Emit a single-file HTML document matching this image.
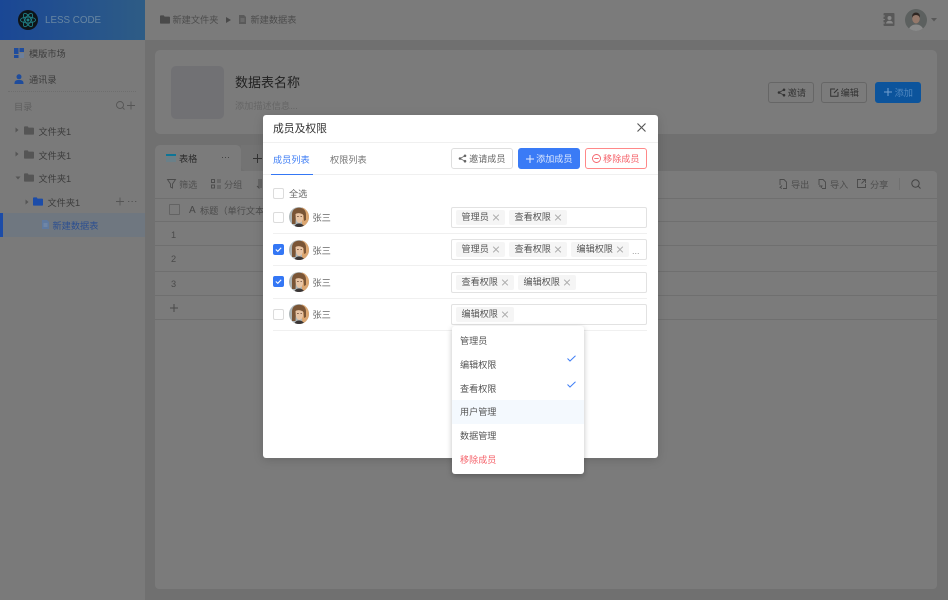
<!DOCTYPE html>
<html lang="zh"><head><meta charset="utf-8"><title>成员及权限</title>
<style>
*{box-sizing:border-box}
html,body{margin:0;padding:0}
body{width:948px;height:600px;overflow:hidden;position:relative;background:#707070;font-family:"Liberation Sans","Noto Sans CJK SC",sans-serif;font-size:9.2px;color:#3a3a3a}
.a{position:absolute}
.t{position:absolute;white-space:nowrap;line-height:14px;height:14px;margin-top:1.5px}
svg{position:absolute;display:block;overflow:visible}
.cb{position:absolute;width:11px;height:11px;left:273px;border:1px solid #dcdcdc;border-radius:2px;background:#fff}
.cb.on{background:#3477f5;border-color:#3477f5}
.tagbox{position:absolute;left:451px;width:196px;border:1px solid #e2e2e2;border-radius:2px;background:#fff}
.tag{position:absolute;top:1.500px;height:15.500px;background:#f5f5f5;border-radius:2px;color:#555;line-height:15.500px;padding-left:5.500px;white-space:nowrap;font-size:9.1px}
.tag i{position:absolute;top:4.500px;right:6.500px;width:6px;height:6px}
.tag i:before,.tag i:after{content:"";position:absolute;left:-1px;top:2.500px;width:8px;height:1px;background:#aaa;transform:rotate(45deg)}
.tag i:after{transform:rotate(-45deg)}
.line{position:absolute;left:273px;width:374px;height:1px;background:#f0f0f0}
.btn{position:absolute;top:148px;height:21px;width:62px;border-radius:3px;line-height:20px;font-size:9.100px;text-align:right;padding-right:6.500px}
.hb{position:absolute;top:82px;height:21px;border-radius:3px;line-height:20px;border:1px solid #666;color:#333;text-align:right;padding-right:7px;font-size:9.200px}
.dd{position:absolute;left:452px;width:132px;height:24px;line-height:24px;padding-left:8px;color:#555;font-size:9.100px}
.g{color:#3c3c3c}
</style></head>
<body>
<svg width="0" height="0" style="position:absolute"><defs>
<symbol id="av" viewBox="0 0 20 20">
<clipPath id="c"><circle cx="10" cy="10" r="10"/></clipPath>
<g clip-path="url(#c)">
<rect width="20" height="20" fill="#aeb6b8"/>
<rect x="13" width="7" height="20" fill="#dba671"/>
<path d="M3 17V8Q3 1 10 .8Q17 1 17 8V13L15 14L14.500 8L7 6.500L6.500 17Z" fill="#7a5536"/>
<path d="M6.500 7Q10 5 14 7.500L14 12Q12.500 16 10.200 16Q7.500 15.500 6.800 11Z" fill="#e8c4a4"/>
<path d="M5 20Q7 16 10 16.500Q13 16 16 20Z" fill="#3a3534"/>
<path d="M8 9.500h1.800M11.500 9.500h1.500" stroke="#6a4a36" stroke-width=".7"/>
</g></symbol>
<symbol id="folder" viewBox="0 0 12 10"><path d="M0 1Q0 0 1 0H4.500L5.500 1.500H11Q12 1.500 12 2.500V9Q12 10 11 10H1Q0 10 0 9Z"/></symbol>
</defs></svg>

<!-- sidebar -->
<div class="a" style="left:0;top:0;width:145px;height:600px;background:#7a7a7a"></div>
<div class="a" style="left:0;top:0;width:145px;height:40px;background:linear-gradient(90deg,#1a4795,#2e5c85)"></div>
<svg style="left:18px;top:10px" width="20" height="20" viewBox="0 0 20 20"><circle cx="10" cy="10" r="10" fill="#0e1418"/><g fill="none" stroke="#1f7f85" stroke-width=".9"><ellipse cx="10" cy="10" rx="7.500" ry="3"/><ellipse cx="10" cy="10" rx="7.500" ry="3" transform="rotate(60 10 10)"/><ellipse cx="10" cy="10" rx="7.500" ry="3" transform="rotate(120 10 10)"/></g><circle cx="10" cy="10" r="1.500" fill="#1f7f85"/></svg>
<div class="t" style="left:45px;top:12px;color:#6886a2;font-size:9.800px">LESS CODE</div>

<svg style="left:14px;top:48px" width="10" height="10" viewBox="0 0 10 10"><rect width="4.500" height="6" fill="#1f4c9c"/><rect x="5.500" width="4.500" height="4" fill="#1f4c9c"/><rect y="7" width="4.500" height="3" fill="#1f4c9c"/><rect x="5.500" y="5" width="4.500" height="5" fill="#6d7f9a"/></svg>
<div class="t g" style="left:29px;top:45.500px">模版市场</div>
<svg style="left:14px;top:74px" width="10" height="10" viewBox="0 0 10 10"><circle cx="5" cy="2.800" r="2.500" fill="#1f4c9c"/><path d="M0.500 10V9Q0.500 6.500 3.500 6H6.500Q9.500 6.500 9.500 9V10Z" fill="#1f4c9c"/></svg>
<div class="t g" style="left:29px;top:71.500px">通讯录</div>
<div class="a" style="left:8px;top:91px;width:128px;border-top:1px dotted #6e6e6e"></div>
<div class="t" style="left:14px;top:98px;color:#5e5e5e">目录</div>
<svg style="left:115px;top:100px" width="20" height="11" viewBox="0 0 20 11" fill="none" stroke="#555" stroke-width=".9"><circle cx="5" cy="5" r="3.500"/><path d="M7.600 7.600L9.500 9.500M12 5.500h8M16 1.500v8"/></svg>

<svg style="left:15px;top:127px" width="4" height="6" viewBox="0 0 4 6"><path d="M0.500 0.500L3.500 3L0.500 5.500Z" fill="#555"/></svg>
<svg style="left:24px;top:126px" width="10" height="9" fill="#555"><use href="#folder" width="10" height="9"/></svg>
<div class="t g" style="left:38.500px;top:123.500px">文件夹1</div>
<svg style="left:15px;top:151px" width="4" height="6" viewBox="0 0 4 6"><path d="M0.500 0.500L3.500 3L0.500 5.500Z" fill="#555"/></svg>
<svg style="left:24px;top:150px" width="10" height="9" fill="#555"><use href="#folder" width="10" height="9"/></svg>
<div class="t g" style="left:38.500px;top:147px">文件夹1</div>
<svg style="left:14.500px;top:176px" width="6" height="4" viewBox="0 0 6 4"><path d="M0.500 0.500L5.500 0.500L3 3.500Z" fill="#555"/></svg>
<svg style="left:24px;top:173px" width="10" height="9" fill="#555"><use href="#folder" width="10" height="9"/></svg>
<div class="t g" style="left:38.500px;top:170.500px">文件夹1</div>
<svg style="left:24.500px;top:198.500px" width="4" height="6" viewBox="0 0 4 6"><path d="M0.500 0.500L3.500 3L0.500 5.500Z" fill="#555"/></svg>
<svg style="left:33px;top:197px" width="10" height="9" fill="#1c4ca8"><use href="#folder" width="10" height="9"/></svg>
<div class="t g" style="left:47.500px;top:194.500px">文件夹1</div>
<svg style="left:115px;top:197px" width="22" height="9" viewBox="0 0 22 9" fill="none" stroke="#555" stroke-width=".9"><path d="M1 4.500h8M5 .5v8"/><path d="M13 4.500h1.300M16.500 4.500h1.300M20 4.500h1.300" stroke-width="1"/></svg>
<div class="a" style="left:0;top:213px;width:145px;height:24px;background:#6f7780"></div>
<div class="a" style="left:0;top:213px;width:2.500px;height:24px;background:#1c4ca8"></div>
<svg style="left:42px;top:220px" width="7" height="9" viewBox="0 0 7 9"><path d="M0 0H5L7 2V9H0Z" fill="#5f7aa0"/><path d="M1.500 4h4M1.500 6h4" stroke="#8b9bb0" stroke-width=".7"/></svg>
<div class="t" style="left:52.500px;top:217.500px;color:#2c4f90">新建数据表</div>

<!-- top bar -->
<div class="a" style="left:145px;top:0;width:803px;height:40px;background:#7b7b7b"></div>
<svg style="left:160px;top:15px" width="10" height="9" fill="#4a4a4a"><use href="#folder" width="10" height="9"/></svg>
<div class="t" style="left:172.500px;top:11.500px;color:#4c4c4c">新建文件夹</div>
<svg style="left:226px;top:17px" width="5" height="6" viewBox="0 0 5 6"><path d="M0 0L5 3L0 6Z" fill="#4a4a4a"/></svg>
<svg style="left:239px;top:15px" width="7" height="9" viewBox="0 0 7 9"><path d="M0 0H5L7 2V9H0Z" fill="#5a5a5a"/><path d="M1.500 4h4M1.500 6h4" stroke="#858585" stroke-width=".7"/></svg>
<div class="t" style="left:250.500px;top:11.500px;color:#4c4c4c">新建数据表</div>
<svg style="left:883px;top:13px" width="12" height="13" viewBox="0 0 12 13"><rect x="0.500" width="11" height="13" rx="1" fill="#585858"/><circle cx="6.500" cy="5" r="2" fill="#888"/><path d="M3 10.500Q3.500 7.800 6.500 7.800Q9.500 7.800 10 10.500Z" fill="#888"/><path d="M0 3h2M0 6.500h2M0 10h2" stroke="#888" stroke-width=".8"/></svg>
<svg style="left:905px;top:9px" width="22" height="22" viewBox="0 0 22 22"><circle cx="11" cy="11" r="11" fill="#5c605f"/><clipPath id="c2"><circle cx="11" cy="11" r="11"/></clipPath><g clip-path="url(#c2)"><path d="M3 22Q5 15.500 11 15.500Q17 15.500 19 22Z" fill="#8a8a8a"/><ellipse cx="11" cy="9.500" rx="3.800" ry="5" fill="#94786a"/><path d="M7 9Q6.800 3.500 11 3.500Q15.200 3.500 15 9Q14 6 11 6Q8 6 7 9Z" fill="#2e2622"/></g></svg>
<svg style="left:931px;top:18px" width="6" height="4" viewBox="0 0 6 4"><path d="M0 0H6L3 3.500Z" fill="#585858"/></svg>

<!-- header card -->
<div class="a" style="left:155px;top:50px;width:782px;height:84px;background:#7b7b7b;border-radius:5px"></div>
<div class="a" style="left:171px;top:66px;width:53px;height:53px;background:#717174;border-radius:5px"></div>
<div class="t" style="left:235px;top:72.500px;font-size:13px;line-height:17px;height:17px;color:#222">数据表名称</div>
<div class="t" style="left:235px;top:97.500px;color:#666">添加描述信息...</div>
<div class="hb" style="left:768px;width:46px">邀请</div>
<svg style="left:777px;top:88px" width="9" height="9" viewBox="0 0 9 9" fill="#333"><circle cx="7" cy="1.800" r="1.300"/><circle cx="2" cy="4.500" r="1.300"/><circle cx="7" cy="7.200" r="1.300"/><path d="M7 1.800L2 4.500L7 7.200" fill="none" stroke="#333" stroke-width=".8"/></svg>
<div class="hb" style="left:821px;width:46px">编辑</div>
<svg style="left:830px;top:88px" width="9" height="9" viewBox="0 0 9 9" fill="none" stroke="#333" stroke-width="1"><path d="M5 1H.7V8.300H8V4M4 5L8 1"/></svg>
<div class="hb" style="left:875px;width:46px;background:#0c549c;border-color:#0c549c;color:#5389c0">添加</div>
<svg style="left:884px;top:88px" width="8" height="8" viewBox="0 0 8 8" stroke="#74a0cf" stroke-width="1"><path d="M0 4h8M4 0v8"/></svg>

<!-- table card -->
<div class="a" style="left:155px;top:171px;width:782px;height:418px;background:#7b7b7b;border-radius:0 4px 4px 4px"></div>
<div class="a" style="left:155px;top:145px;width:86px;height:27px;background:#7b7b7b;border-radius:5px 5px 0 0"></div>
<div class="a" style="left:241px;top:145px;width:30px;height:26px;background:#737373;border-radius:0 5px 0 5px"></div>
<svg style="left:166px;top:154px" width="10" height="8" viewBox="0 0 10 8"><rect width="10" height="2" fill="#0d7597"/><rect y="2.500" width="10" height="5.500" fill="#6a8089"/></svg>
<div class="t" style="left:179px;top:150px;color:#2a2a2a">表格</div>
<div class="t" style="left:221px;top:148px;color:#3c3c3c;font-size:9px">···</div>
<svg style="left:253px;top:154px" width="9" height="9" viewBox="0 0 9 9" stroke="#333" stroke-width="1"><path d="M0 4.500h9M4.500 0v9"/></svg>
<svg style="left:167px;top:179px" width="9" height="10" viewBox="0 0 9 10" fill="none" stroke="#4a4a4a" stroke-width=".9"><path d="M.5.500h8L5.500 5v4L3.500 8V5Z"/></svg>
<div class="t" style="left:179px;top:176.500px;color:#505050">筛选</div>
<svg style="left:211px;top:179px" width="10" height="10" viewBox="0 0 10 10" fill="none" stroke="#4a4a4a" stroke-width=".9"><rect x=".5" y=".5" width="3" height="3"/><rect x=".5" y="6" width="3" height="3"/><path d="M6 1h4M6 3h4M6 7h4M6 9h4" stroke-width=".7"/></svg>
<div class="t" style="left:224px;top:176.500px;color:#505050">分组</div>
<svg style="left:256px;top:179px" width="7" height="10" viewBox="0 0 7 10" fill="none" stroke="#4a4a4a" stroke-width=".9"><path d="M3 0v9L1 7M5 0v9"/></svg>
<div class="a" style="left:155px;top:198px;width:782px;height:1px;background:#6f6f6f"></div>
<div class="a" style="left:169px;top:204px;width:11px;height:11px;border:1px solid #636363;border-radius:1px"></div>
<div class="t" style="left:189px;top:202.500px;color:#474747;font-size:10px">A</div>
<div class="t" style="left:200px;top:202.500px;color:#4c4c4c">标题（单行文本）</div>
<div class="a" style="left:155px;top:221px;width:782px;height:1px;background:#6f6f6f"></div>
<div class="t" style="left:171px;top:226.500px;color:#4a4a4a">1</div>
<div class="a" style="left:155px;top:245px;width:782px;height:1px;background:#6f6f6f"></div>
<div class="t" style="left:171px;top:250.500px;color:#4a4a4a">2</div>
<div class="a" style="left:155px;top:270.500px;width:782px;height:1px;background:#6f6f6f"></div>
<div class="t" style="left:171px;top:275.500px;color:#4a4a4a">3</div>
<div class="a" style="left:155px;top:295px;width:782px;height:1px;background:#6f6f6f"></div>
<svg style="left:170px;top:304px" width="8" height="8" viewBox="0 0 8 8" stroke="#4a4a4a" stroke-width="1"><path d="M0 4h8M4 0v8"/></svg>
<div class="a" style="left:155px;top:319px;width:782px;height:1px;background:#6f6f6f"></div>
<svg style="left:779px;top:179px" width="8" height="10" viewBox="0 0 8 10" fill="none" stroke="#4a4a4a" stroke-width=".9"><path d="M1 6V.5H5L7.500 3V9.500H4M3 6.500L1 8.500L3 9.500"/></svg>
<div class="t" style="left:791px;top:176.500px;color:#4e4e4e">导出</div>
<svg style="left:818px;top:179px" width="8" height="10" viewBox="0 0 8 10" fill="none" stroke="#4a4a4a" stroke-width=".9"><path d="M1 6V.5H5L7.500 3V9.500H4M1 7H4L3 9"/></svg>
<div class="t" style="left:830px;top:176.500px;color:#4e4e4e">导入</div>
<svg style="left:857px;top:179px" width="9" height="9" viewBox="0 0 9 9" fill="none" stroke="#4a4a4a" stroke-width=".9"><path d="M4 .5H.5V8.500H8.500V5M5 .5H8.500V4M8.500 .5L4.500 4.500"/></svg>
<div class="t" style="left:870px;top:176.500px;color:#4e4e4e">分享</div>
<div class="a" style="left:899px;top:178px;width:1px;height:12px;background:#707070"></div>
<svg style="left:911px;top:179px" width="10" height="10" viewBox="0 0 10 10" fill="none" stroke="#444" stroke-width="1"><circle cx="4.500" cy="4.500" r="3.700"/><path d="M7.300 7.300L9.500 9.500"/></svg>

<!-- modal -->
<div class="a" style="left:263px;top:115px;width:395px;height:343px;background:#fff;border-radius:3px;box-shadow:0 2px 10px rgba(0,0,0,.15)"></div>
<div class="t" style="left:273px;top:119px;font-size:10.800px;line-height:16px;height:16px;color:#333">成员及权限</div>
<svg style="left:637px;top:123px" width="9" height="9" viewBox="0 0 9 9" stroke="#555" stroke-width="1.100"><path d="M.5.500L8.500 8.500M8.500.5L.5 8.500"/></svg>
<div class="a" style="left:263px;top:142px;width:395px;height:1px;background:#f0f0f0"></div>
<div class="t" style="left:273px;top:151px;color:#3f7ef5">成员列表</div>
<div class="t" style="left:330px;top:151px;color:#777">权限列表</div>
<div class="a" style="left:263px;top:174px;width:395px;height:1px;background:#f0f0f0"></div>
<div class="a" style="left:271px;top:173.500px;width:42px;height:1.500px;background:#3477f5"></div>

<div class="btn" style="left:451px;border:1px solid #dedede;color:#666;background:#fff">邀请成员</div>
<svg style="left:458px;top:154px" width="9" height="9" viewBox="0 0 9 9" fill="#666"><circle cx="7" cy="1.800" r="1.300"/><circle cx="2" cy="4.500" r="1.300"/><circle cx="7" cy="7.200" r="1.300"/><path d="M7 1.800L2 4.500L7 7.200" fill="none" stroke="#666" stroke-width=".8"/></svg>
<div class="btn" style="left:518px;background:#3a7bf6;color:#dbe7fd;border:1px solid #3a7bf6">添加成员</div>
<svg style="left:526px;top:155px" width="8" height="8" viewBox="0 0 8 8" stroke="#e5eefe" stroke-width="1"><path d="M0 4h8M4 0v8"/></svg>
<div class="btn" style="left:585px;border:1px solid #f88;color:#f5626a;background:#fff">移除成员</div>
<svg style="left:592px;top:154px" width="9" height="9" viewBox="0 0 9 9" fill="none" stroke="#f5626a" stroke-width=".9"><circle cx="4.500" cy="4.500" r="4"/><path d="M2.300 4.500h4.400"/></svg>

<div class="cb" style="top:188px"></div>
<div class="t" style="left:289px;top:185.500px;color:#666">全选</div>

<div class="cb" style="top:212px"></div>
<svg style="left:289px;top:207px" width="20" height="20"><use href="#av" width="20" height="20"/></svg>
<div class="t" style="left:312.500px;top:209.500px;color:#666">张三</div>
<div class="line" style="top:233px"></div>
<div class="tagbox" style="top:207px;height:21px">
<div class="tag" style="left:4px;width:49px">管理员<i></i></div>
<div class="tag" style="left:57px;width:58px">查看权限<i></i></div>
</div>

<div class="cb on" style="top:244px"></div>
<svg style="left:275px;top:247px" width="7" height="5" viewBox="0 0 7 5" fill="none" stroke="#fff" stroke-width="1.100"><path d="M.8 2.500L2.800 4.300L6.200.8"/></svg>
<svg style="left:289px;top:240px" width="20" height="20"><use href="#av" width="20" height="20"/></svg>
<div class="t" style="left:312.500px;top:242px;color:#666">张三</div>
<div class="line" style="top:265px"></div>
<div class="tagbox" style="top:239px;height:21px">
<div class="tag" style="left:4px;width:49px">管理员<i></i></div>
<div class="tag" style="left:57px;width:58px">查看权限<i></i></div>
<div class="tag" style="left:119px;width:58px">编辑权限<i></i></div>
<div class="a" style="left:180px;top:3px;color:#999;font-size:9px;line-height:16px">...</div>
</div>

<div class="cb on" style="top:276px"></div>
<svg style="left:275px;top:279px" width="7" height="5" viewBox="0 0 7 5" fill="none" stroke="#fff" stroke-width="1.100"><path d="M.8 2.500L2.800 4.300L6.200.8"/></svg>
<svg style="left:289px;top:272px" width="20" height="20"><use href="#av" width="20" height="20"/></svg>
<div class="t" style="left:312.500px;top:274.500px;color:#666">张三</div>
<div class="line" style="top:297.500px"></div>
<div class="tagbox" style="top:272px;height:21px">
<div class="tag" style="left:4px;width:58px">查看权限<i></i></div>
<div class="tag" style="left:66px;width:58px">编辑权限<i></i></div>
</div>

<div class="cb" style="top:309px"></div>
<svg style="left:289px;top:304px" width="20" height="20"><use href="#av" width="20" height="20"/></svg>
<div class="t" style="left:312.500px;top:306.500px;color:#666">张三</div>
<div class="line" style="top:330px"></div>
<div class="tagbox" style="top:304px;height:21px">
<div class="tag" style="left:4px;width:58px">编辑权限<i></i></div>
</div>

<!-- dropdown -->
<div class="a" style="left:452px;top:326px;width:132px;height:148px;background:#fff;border-radius:3px;box-shadow:0 2px 6px rgba(0,0,0,.25)"></div>
<div class="dd" style="top:329px">管理员</div>
<div class="dd" style="top:352.500px">编辑权限</div>
<div class="dd" style="top:376.500px">查看权限</div>
<div class="dd" style="top:400px;background:#f4f9fe">用户管理</div>
<div class="dd" style="top:423.500px">数据管理</div>
<div class="dd" style="top:447.500px;color:#f5626a">移除成员</div>
<svg style="left:567px;top:355px" width="9" height="7" viewBox="0 0 9 7" fill="none" stroke="#3f7ef5" stroke-width="1"><path d="M.5 3.500L3 6L8.500.8"/></svg>
<svg style="left:567px;top:381px" width="9" height="7" viewBox="0 0 9 7" fill="none" stroke="#3f7ef5" stroke-width="1"><path d="M.5 3.500L3 6L8.500.8"/></svg>
</body></html>
